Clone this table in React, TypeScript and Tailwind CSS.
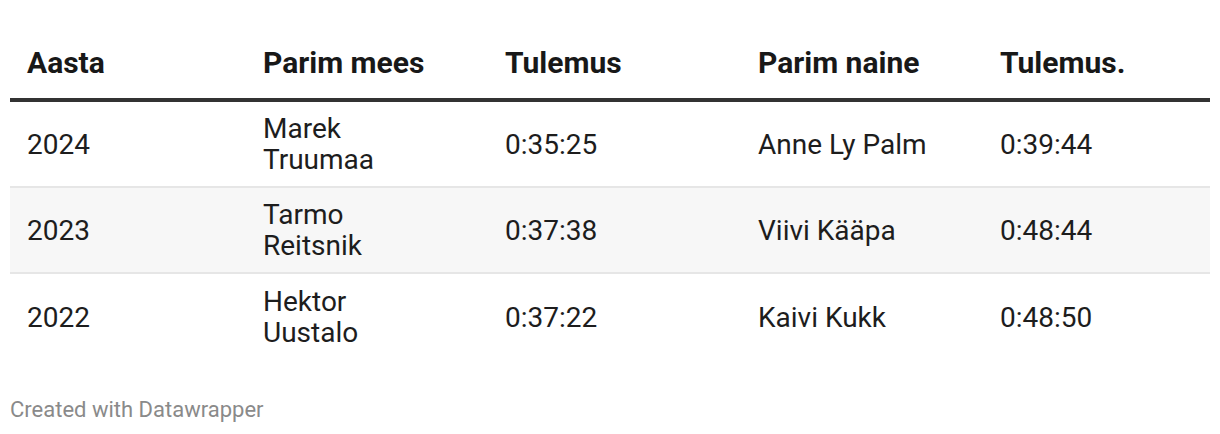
const rows = [
  { year: "2024", man: ["Marek", "Truumaa"], manTime: "0:35:25", woman: "Anne Ly Palm", womanTime: "0:39:44" },
  { year: "2023", man: ["Tarmo", "Reitsnik"], manTime: "0:37:38", woman: "Viivi Kääpa", womanTime: "0:48:44" },
  { year: "2022", man: ["Hektor", "Uustalo"], manTime: "0:37:22", woman: "Kaivi Kukk", womanTime: "0:48:50" },
];

const cols = "grid grid-cols-[236px_242px_253px_242px_1fr]";

export default function App() {
  return (
    <div className="w-[1220px] h-[434px] bg-white px-[10px] pt-[28px] font-['Roboto',sans-serif] text-[#1d1d1d]">
      <div className={`${cols} h-[74px] items-center border-b-4 border-[#333333] text-[30px] font-bold leading-[34px] text-[#181818]`}>
        <div className="pl-[17px]">Aasta</div>
        <div className="pl-[17px]">Parim mees</div>
        <div className="pl-[17px]">Tulemus</div>
        <div className="pl-[17px]">Parim naine</div>
        <div className="pl-[17px]">Tulemus.</div>
      </div>
      {rows.map((r, i) => (
        <div
          key={r.year}
          className={`${cols} h-[86px] items-center text-[28px] leading-[31px] ${i < rows.length - 1 ? "border-b-2 border-[#e6e6e6]" : "h-[84px]"} ${i === 1 ? "bg-[#f7f7f7]" : ""}`}
        >
          <div className="pl-[17px]">{r.year}</div>
          <div className="pl-[17px]">
            {r.man[0]}
            <br />
            {r.man[1]}
          </div>
          <div className="pl-[17px]">{r.manTime}</div>
          <div className="pl-[17px]">{r.woman}</div>
          <div className="pl-[17px]">{r.womanTime}</div>
        </div>
      ))}
      <div className="mt-[38px] text-[22px] leading-[24px] text-[#8a8a8a]">Created with Datawrapper</div>
    </div>
  );
}
